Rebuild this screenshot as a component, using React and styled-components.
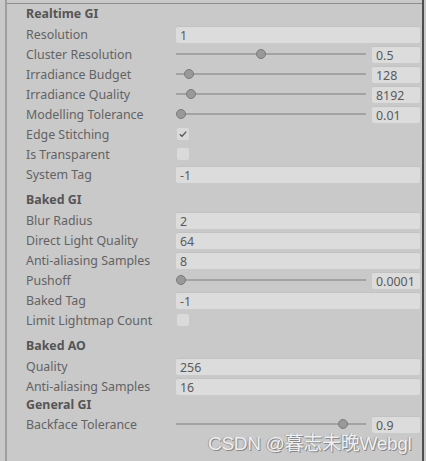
import React from "react";
import styled, { createGlobalStyle } from "styled-components";

const Global = createGlobalStyle`
  html, body { margin: 0; padding: 0; background: #c9c9c9; }
  body { font-family: "Noto Sans", "Open Sans", sans-serif; }
`;

const Page = styled.div`
  position: relative;
  height: 461px;
  padding-left: 5px;
  display: flex;
  overflow: hidden;
`;

const Frame = styled.div`
  width: 415px;
  border-left: 2px solid #9f9f9f;
  border-right: 2px solid #4e4e4e;
  display: flex;
  flex-direction: column;
`;

const Panel = styled.div`
  margin-top: 3px;
  border-top: 1px solid #8e8e8e;
  padding: 0 2px 0 19px;
  display: flex;
  flex-direction: column;
`;

const Section = styled.div`
  display: flex;
  flex-direction: column;
  margin-top: ${(p) => p.$gap || 0}px;
`;

const Header = styled.div`
  height: ${(p) => p.$h || 20}px;
  line-height: ${(p) => p.$h || 20}px;
  font-size: 12.4px;
  font-weight: 700;
  color: #555;
`;

const Row = styled.div`
  height: 20px;
  display: grid;
  grid-template-columns: 150px 1fr;
  align-items: center;
`;

const Label = styled.div`
  font-size: 12.4px;
  color: #636363;
  white-space: nowrap;
`;

const Field = styled.div`
  height: 17px;
  line-height: 17px;
  background: #dcdcdc;
  border-top: 1px solid #c2c2c2;
  box-sizing: border-box;
  border-radius: 2px;
  padding-left: 4px;
  font-size: 12.4px;
  color: #5a5a5a;
  width: ${(p) => (p.$w ? `${p.$w}px` : "auto")};
`;

const SliderWrap = styled.div`
  display: flex;
  align-items: center;
  gap: 6px;
`;

const Track = styled.div`
  position: relative;
  flex: 1;
  height: 12px;
  &::before {
    content: "";
    position: absolute;
    left: 0;
    right: 0;
    top: 5px;
    height: 2px;
    background: #a3a3a3;
  }
`;

const Knob = styled.div`
  position: absolute;
  top: 1px;
  width: 10px;
  height: 10px;
  margin-left: -5px;
  border-radius: 50%;
  box-sizing: border-box;
  background: #999;
  border: 1px solid #7a7a7a;
`;

const CheckBox = styled.div`
  width: 12px;
  height: 12px;
  margin-left: 1px;
  box-sizing: border-box;
  background: #dadada;
  border-radius: 2px;
  display: flex;
  align-items: center;
  justify-content: center;
`;

const Watermark = styled.div`
  position: absolute;
  left: 208px;
  top: 428px;
  font-family: "Liberation Sans", "Noto Sans CJK SC", sans-serif;
  font-size: 19px;
  color: #efefef;
  text-shadow: 1px 1px 0 #8a8a8a, -1px 0 0 #a0a0a0;
  white-space: nowrap;
  letter-spacing: -0.3px;
`;

const Slider = ({ frac, value }) => (
  <SliderWrap>
    <Track>
      <Knob style={{ left: `calc(5px + (100% - 10px) * ${frac})` }} />
    </Track>
    <Field $w={48}>{value}</Field>
  </SliderWrap>
);

const Check = ({ checked }) => (
  <CheckBox>
    {checked && (
      <svg width="10" height="10" viewBox="0 0 10 10">
        <path d="M1.8 5.2 L4 7.3 L8.3 2.6" fill="none" stroke="#555" strokeWidth="1.3" />
      </svg>
    )}
  </CheckBox>
);

const R = ({ label, children }) => (
  <Row>
    <Label>{label}</Label>
    <div>{children}</div>
  </Row>
);

export default function App() {
  return (
    <>
      <Global />
      <Page>
        <Frame>
          <Panel>
            <Section>
              <Header>Realtime GI</Header>
              <R label="Resolution"><Field>1</Field></R>
              <R label="Cluster Resolution"><Slider frac={0.444} value="0.5" /></R>
              <R label="Irradiance Budget"><Slider frac={0.045} value="128" /></R>
              <R label="Irradiance Quality"><Slider frac={0.057} value="8192" /></R>
              <R label="Modelling Tolerance"><Slider frac={0} value="0.01" /></R>
              <R label="Edge Stitching"><Check checked /></R>
              <R label="Is Transparent"><Check /></R>
              <R label="System Tag"><Field>-1</Field></R>
            </Section>
            <Section $gap={6}>
              <Header>Baked GI</Header>
              <R label="Blur Radius"><Field>2</Field></R>
              <R label="Direct Light Quality"><Field>64</Field></R>
              <R label="Anti-aliasing Samples"><Field>8</Field></R>
              <R label="Pushoff"><Slider frac={0} value="0.0001" /></R>
              <R label="Baked Tag"><Field>-1</Field></R>
              <R label="Limit Lightmap Count"><Check /></R>
            </Section>
            <Section $gap={6}>
              <Header>Baked AO</Header>
              <R label="Quality"><Field>256</Field></R>
              <R label="Anti-aliasing Samples"><Field>16</Field></R>
              <Header $h={18}>General GI</Header>
              <R label="Backface Tolerance"><Slider frac={0.9} value="0.9" /></R>
            </Section>
          </Panel>
        </Frame>
        <Watermark>CSDN @暮志未晚Webgl</Watermark>
      </Page>
    </>
  );
}
